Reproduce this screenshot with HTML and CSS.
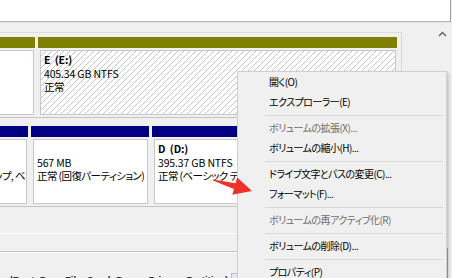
FILE: index.html
```html
<!DOCTYPE html>
<html lang="ja">
<head>
  <meta charset="UTF-8" />
  <title>ディスクの管理</title>
  <link rel="stylesheet" href="styles.css">
</head>
<body>
  <div class="top"></div>

  <div class="main">
    <div class="disks">
      <!-- disk 0 -->
      <div class="disk-row">
        <div class="seg seg-sys">
          <div class="bar olive"></div>
          <div class="inner"></div>
        </div>
        <div class="seg seg-e">
          <div class="bar olive"></div>
          <div class="inner hatch">
            <div class="name">E&nbsp;&nbsp;(E:)</div>
            <div>405.34 GB NTFS</div>
            <div class="status">正常</div>
          </div>
        </div>
      </div>

      <!-- disk 1 -->
      <div class="disk-row">
        <div class="seg seg-boot">
          <div class="bar navy"></div>
          <div class="inner clip-left">
            <div>&nbsp;</div>
            <div>&nbsp;</div>
            <div class="status">ップ, ベ</div>
          </div>
        </div>
        <div class="seg seg-rec">
          <div class="bar navy"></div>
          <div class="inner">
            <div>&nbsp;</div>
            <div>567 MB</div>
            <div class="status">正常 (回復パーティション)</div>
          </div>
        </div>
        <div class="seg seg-d">
          <div class="bar navy"></div>
          <div class="inner">
            <div class="name">D&nbsp;&nbsp;(D:)</div>
            <div>395.37 GB NTFS</div>
            <div class="status">正常 (ベーシック デ</div>
          </div>
        </div>
      </div>

      <div class="rule light"></div>
      <div class="rule dark"></div>

      <div class="legend">
        <span class="legend-text">ry (Boot, Page File, Crash Dump, Primary Partition)</span>
        <span class="legend-box">Basic</span>
      </div>
    </div>

    <div class="gutter"></div>
    <div class="vscroll">
      <svg class="up" width="9" height="6" viewBox="0 0 9 6">
        <polyline points="1,5 4.5,1.5 8,5" fill="none" stroke="#606060" stroke-width="1.4"/>
      </svg>
      <div class="thumb"></div>
    </div>
  </div>

  <!-- context menu -->
  <ul class="menu">
    <li>開く(O)</li>
    <li>エクスプローラー(E)</li>
    <li class="sep"></li>
    <li class="off">ボリュームの拡張(X)...</li>
    <li>ボリュームの縮小(H)...</li>
    <li class="sep"></li>
    <li>ドライブ文字とパスの変更(C)...</li>
    <li>フォーマット(F)...</li>
    <li class="sep"></li>
    <li class="off">ボリュームの再アクティブ化(R)</li>
    <li class="sep"></li>
    <li>ボリュームの削除(D)...</li>
    <li class="sep"></li>
    <li>プロパティ(P)</li>
  </ul>

  <svg class="arrow" width="45" height="24" viewBox="0 0 45 24">
    <polygon points="3.1,5.5 25.5,9.2 27.2,3.4 42,17 22.3,20.8 23.9,15 2.9,6.5" fill="#f0312b"/>
  </svg>
</body>
</html>
```

FILE: styles.css
```css
* {
  box-sizing: border-box;
}

body {
  margin: 0;
  width: 452px;
  height: 278px;
  overflow: hidden;
  position: relative;
  background: #f0f0f0;
  color: #000;
  font-family: "Noto Sans CJK JP", "Noto Sans", sans-serif;
  font-size: 10.5px;
  font-feature-settings: "palt";
}

.top {
  height: 22px;
  width: 451px;
  background: #fff;
  border-right: 1px solid #a0a0a0;
  border-bottom: 1px solid #b9b9b9;
  box-shadow: 0 1px 0 #e2e2e2;
}

.main {
  display: flex;
  height: 256px;
}

.disks {
  width: 402px;
  margin-top: 10px;
  border-top: 1px solid #dcdcdc;
  border-right: 1px solid #d6d6d6;
}

.disk-row {
  display: flex;
  gap: 3px;
  padding: 4px 4px 0 0;
  border-bottom: 1px solid #c4c4c4;
}

.disk-row + .disk-row {
  margin-top: 4px;
}

.seg {
  display: flex;
  flex-direction: column;
}

.seg-sys { width: 35px; }
.seg-e { width: 359px; }
.seg-boot { width: 28px; }
.seg-rec { width: 118px; }
.seg-d { width: 86px; }

.bar {
  height: 11px;
}

.olive { background: #808000; }
.navy { background: #000080; }

.inner {
  height: 65px;
  margin: 2px 1px 2px 2px;
  border: 1px solid #c8c8c8;
  background: #fff;
  padding: 2px 3px;
  line-height: 13.5px;
  letter-spacing: -0.15px;
  white-space: nowrap;
  overflow: hidden;
}

.status {
  letter-spacing: -0.6px;
}

.seg-sys .inner,
.seg-boot .inner {
  margin-left: 0;
  border-left: none;
}

.seg-d .inner {
  margin-right: 0;
  border-right: none;
}

.hatch {
  background: repeating-linear-gradient(135deg, #fff 0 3.1px, #c4c4c4 3.1px 4.24px);
}

.clip-left {
  display: flex;
  flex-direction: column;
  align-items: flex-end;
  padding-right: 1px;
}

.name {
  font-weight: bold;
}

.rule {
  height: 1px;
}

.rule.light {
  margin-top: 26px;
  background: #fff;
}

.rule.dark {
  margin-top: 17px;
  background: #c4c4c4;
  box-shadow: 0 1px 0 #fff;
}

.legend {
  width: 237px;
  overflow: hidden;
  margin-top: 21px;
  display: flex;
  align-items: flex-start;
  gap: 3px;
  font-family: "Liberation Sans", sans-serif;
  font-size: 9.5px;
  font-weight: bold;
  line-height: 13px;
  white-space: nowrap;
  color: #26304d;
}

.legend-text {
  margin-left: -2px;
}

.legend-box {
  padding: 0 3px;
  font-weight: normal;
  background: #e4e7ee;
  border: 1px solid #b8bdc8;
}

.gutter {
  width: 32px;
}

.vscroll {
  flex: 1;
  position: relative;
}

.up {
  display: block;
  margin: 9px 0 0 4px;
}

.thumb {
  margin: 211px 0 0 13px;
  width: 1px;
  height: 30px;
  background: #a6a6a6;
}

/* CONTEXT MENU */
.menu {
  position: absolute;
  left: 237px;
  top: 71px;
  width: 210px;
  margin: 0;
  padding: 0;
  list-style: none;
  background: #f0f0f0;
  border: 1px solid #cfcfcf;
  box-shadow: 2px 2px 3px rgba(0, 0, 0, 0.18);
  font-size: 10px;
  letter-spacing: -0.55px;
  z-index: 10;
}

.menu li {
  height: 20px;
  line-height: 20px;
  padding-left: 31px;
  white-space: nowrap;
}

.menu li.off {
  color: #6d6d6d;
}

.menu li.sep {
  height: 1px;
  margin: 3px 3px 2px 27px;
  padding: 0;
  background: #d7d7d7;
}

.arrow {
  position: absolute;
  left: 210px;
  top: 174px;
  z-index: 20;
}
```
